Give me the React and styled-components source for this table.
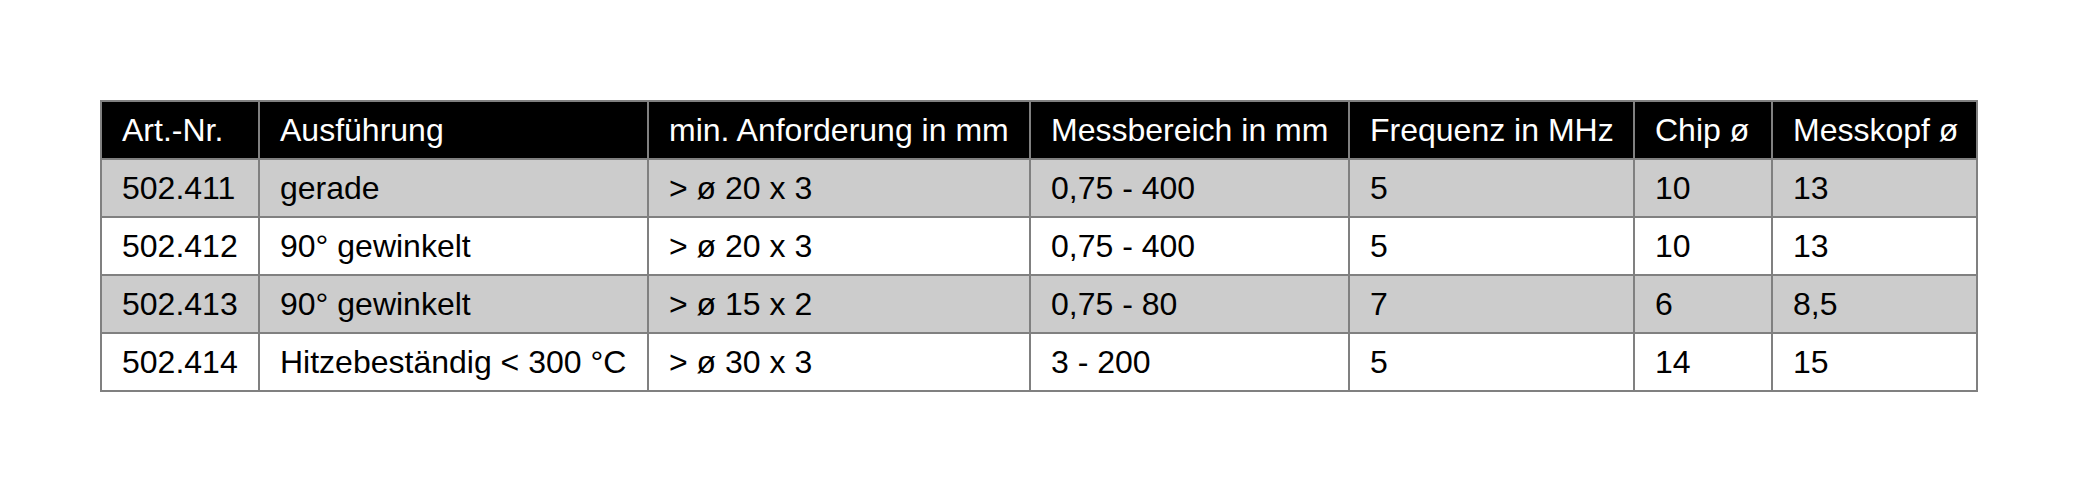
import React from 'react';
import styled, { createGlobalStyle } from 'styled-components';

const GlobalStyle = createGlobalStyle`
  html, body {
    margin: 0;
    padding: 0;
    background: #ffffff;
  }
  body {
    font-family: "Liberation Sans", Arial, sans-serif;
  }
`;

// Column widths (content box) - borders come from the grid gap
const columns = [156, 387, 380, 317, 283, 136, 203];

const Page = styled.div`
  padding: 100px;
`;

const Grid = styled.div`
  display: inline-grid;
  grid-template-columns: ${columns.map(w => `${w}px`).join(' ')};
  grid-auto-rows: 56px;
  gap: 2px;
  padding: 2px;
  background: #808080;
`;

const Cell = styled.div`
  display: flex;
  align-items: center;
  padding-left: 20px;
  font-size: 32px;
  white-space: nowrap;
  background: ${props => props.head ? '#000000' : props.shaded ? '#cccccc' : '#ffffff'};
  color: ${props => props.head ? '#ffffff' : '#000000'};
`;

const headers = [
  'Art.-Nr.',
  'Ausführung',
  'min. Anforderung in mm',
  'Messbereich in mm',
  'Frequenz in MHz',
  'Chip ø',
  'Messkopf ø',
];

const rows = [
  ['502.411', 'gerade', '> ø 20 x 3', '0,75 - 400', '5', '10', '13'],
  ['502.412', '90° gewinkelt', '> ø 20 x 3', '0,75 - 400', '5', '10', '13'],
  ['502.413', '90° gewinkelt', '> ø 15 x 2', '0,75 - 80', '7', '6', '8,5'],
  ['502.414', 'Hitzebeständig < 300 °C', '> ø 30 x 3', '3 - 200', '5', '14', '15'],
];

const App = () => {
  return (
    <Page>
      <GlobalStyle />
      <Grid role="table">
        {headers.map(h => (
          <Cell key={h} head role="columnheader">{h}</Cell>
        ))}
        {rows.map((row, r) =>
          row.map((value, c) => (
            <Cell key={`${r}-${c}`} shaded={r % 2 === 0} role="cell">
              {value}
            </Cell>
          ))
        )}
      </Grid>
    </Page>
  );
};

export default App;
